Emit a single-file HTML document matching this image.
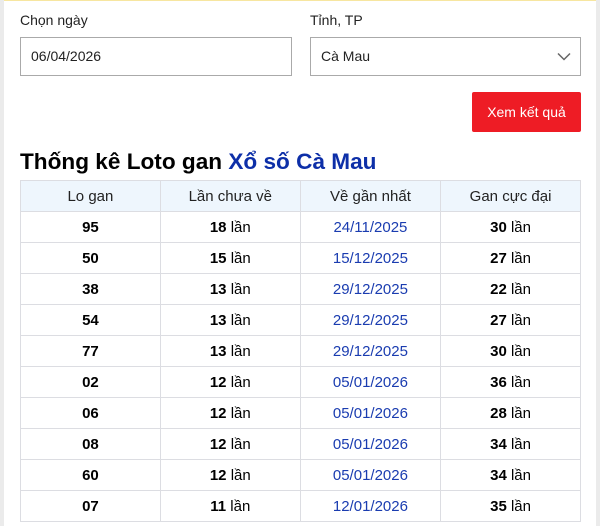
<!DOCTYPE html>
<html><head><meta charset="utf-8"><style>
html,body{margin:0;padding:0;}
body{width:600px;height:526px;overflow:hidden;background:#ebebeb;font-family:"Liberation Sans",Arial,sans-serif;position:relative;}
.wrap{position:absolute;left:4px;top:0;width:592px;height:526px;background:#fff;border-top:1px solid #f7e6a0;box-sizing:border-box;}
.lbl{position:absolute;top:11px;font-size:14px;color:#222;}
.box{position:absolute;top:36px;height:39px;border:1px solid #aaa;box-sizing:border-box;font-size:14px;color:#222;line-height:37px;padding-left:10px;}
.btn{position:absolute;left:468px;top:91px;width:109px;height:40px;background:#ee1c25;color:#fff;font-size:14px;display:flex;align-items:center;justify-content:center;border-radius:2px;}
h1{position:absolute;left:16px;top:148px;margin:0;font-size:22.6px;line-height:26px;font-weight:bold;color:#000;}
h1 span{color:#0d2fa8;}
table{position:absolute;left:16px;top:179px;border-collapse:collapse;width:561px;font-size:15px;}
td,th{border:1px solid #dcdde2;height:30px;padding:0;text-align:center;width:140px;}
th{background:#eef6fd;font-weight:normal;color:#222;}
td b{color:#000;}
td.d{color:#1a3cb0;}
</style></head><body><div class="wrap">
<div class="lbl" style="left:16px">Chọn ngày</div>
<div class="lbl" style="left:306px">Tỉnh, TP</div>
<div class="box" style="left:16px;width:272px">06/04/2026</div>
<div class="box" style="left:306px;width:271px">Cà Mau
<svg style="position:absolute;right:9px;top:14px" width="14" height="9" viewBox="0 0 14 9"><path d="M1 1.5L7 7.5L13 1.5" fill="none" stroke="#666" stroke-width="1.5"/></svg></div>
<div class="btn"><span>Xem kết quả</span></div>
<h1>Thống kê Loto gan <span>Xổ số Cà Mau</span></h1>
<table>
<tr><th>Lo gan</th><th>Lần chưa về</th><th>Về gần nhất</th><th>Gan cực đại</th></tr>
<tr><td><b>95</b></td><td><b>18</b> lần</td><td class="d">24/11/2025</td><td><b>30</b> lần</td></tr>
<tr><td><b>50</b></td><td><b>15</b> lần</td><td class="d">15/12/2025</td><td><b>27</b> lần</td></tr>
<tr><td><b>38</b></td><td><b>13</b> lần</td><td class="d">29/12/2025</td><td><b>22</b> lần</td></tr>
<tr><td><b>54</b></td><td><b>13</b> lần</td><td class="d">29/12/2025</td><td><b>27</b> lần</td></tr>
<tr><td><b>77</b></td><td><b>13</b> lần</td><td class="d">29/12/2025</td><td><b>30</b> lần</td></tr>
<tr><td><b>02</b></td><td><b>12</b> lần</td><td class="d">05/01/2026</td><td><b>36</b> lần</td></tr>
<tr><td><b>06</b></td><td><b>12</b> lần</td><td class="d">05/01/2026</td><td><b>28</b> lần</td></tr>
<tr><td><b>08</b></td><td><b>12</b> lần</td><td class="d">05/01/2026</td><td><b>34</b> lần</td></tr>
<tr><td><b>60</b></td><td><b>12</b> lần</td><td class="d">05/01/2026</td><td><b>34</b> lần</td></tr>
<tr><td><b>07</b></td><td><b>11</b> lần</td><td class="d">12/01/2026</td><td><b>35</b> lần</td></tr>
</table>
</div></body></html>
